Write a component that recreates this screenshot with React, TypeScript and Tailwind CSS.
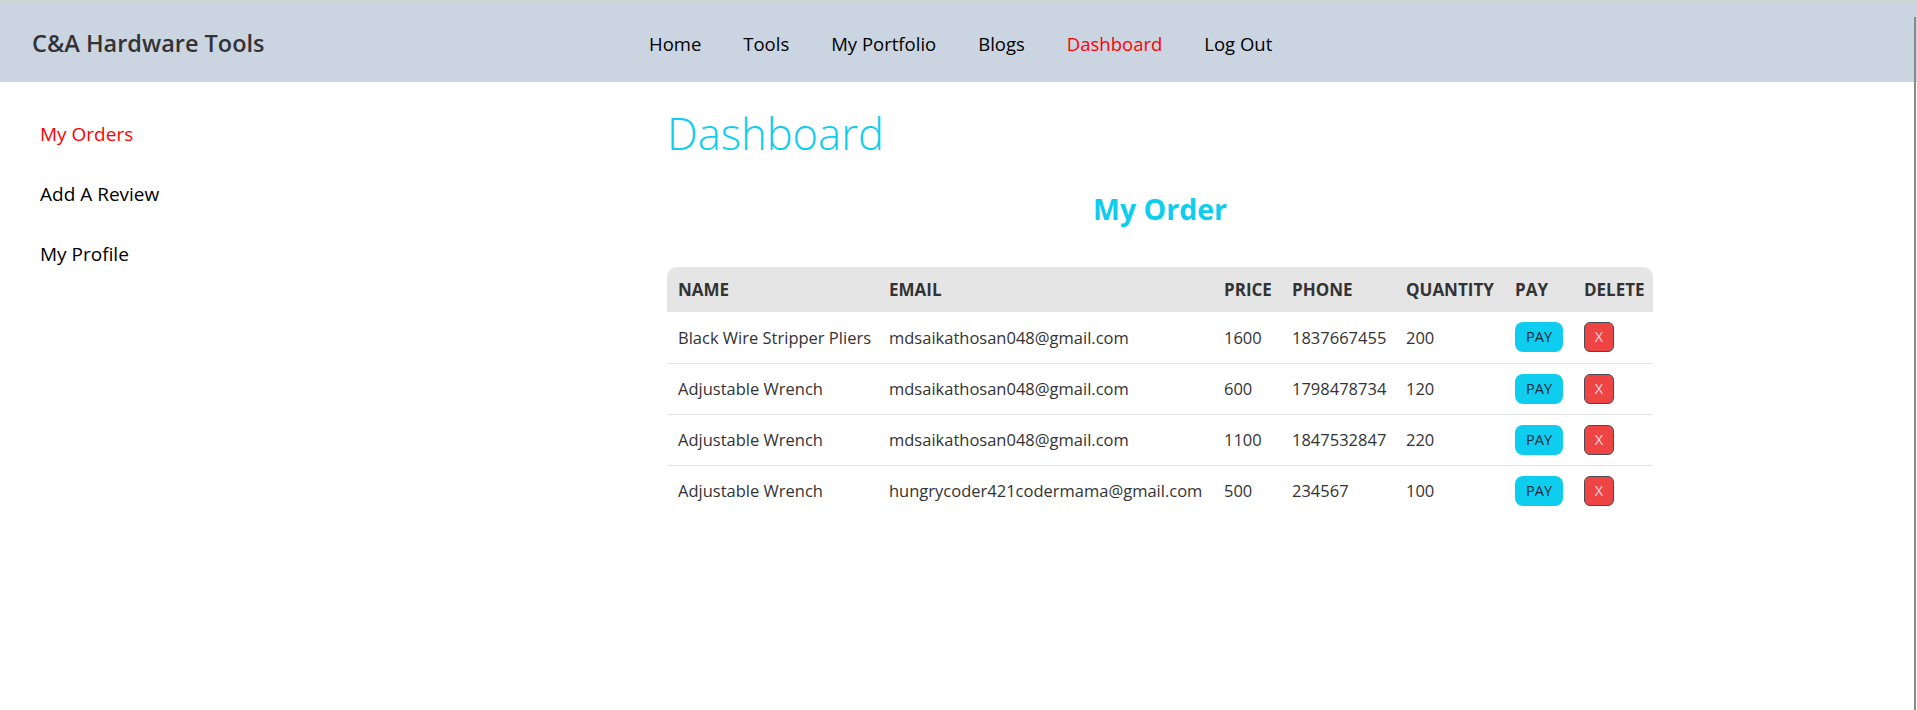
import React from 'react';

const orders = [
  { name: 'Black Wire Stripper Pliers', email: 'mdsaikathosan048@gmail.com', price: 1600, phone: '1837667455', qty: 200 },
  { name: 'Adjustable Wrench', email: 'mdsaikathosan048@gmail.com', price: 600, phone: '1798478734', qty: 120 },
  { name: 'Adjustable Wrench', email: 'mdsaikathosan048@gmail.com', price: 1100, phone: '1847532847', qty: 220 },
  { name: 'Adjustable Wrench', email: 'hungrycoder421codermama@gmail.com', price: 500, phone: '234567', qty: 100 },
];

const navLinks = ['Home', 'Tools', 'My Portfolio', 'Blogs', 'Dashboard', 'Log Out'];

export default function App() {
  return (
    <div className="min-h-[710px] bg-white font-['Open_Sans',sans-serif] text-black">
      <header className="flex h-[82px] items-center border-t border-[#d4d4d4] bg-[#cbd5e1] pt-[4px]">
        <div className="w-[649px] shrink-0 pl-8">
          <a className="text-[23.5px] font-semibold text-[#333]">C&amp;A Hardware Tools</a>
        </div>
        <nav className="flex items-center gap-[42px] text-[18.5px]">
          {navLinks.map((l) => (
            <a key={l} className={l === 'Dashboard' ? 'text-[#ff0000]' : 'text-black'}>
              {l}
            </a>
          ))}
        </nav>
      </header>

      <div className="flex">
        <aside className="w-[667px] shrink-0 pl-10 pt-[22px] text-[19px]">
          <ul className="flex flex-col">
            <li className="flex h-[60px] items-center text-[#ff0000]">My Orders</li>
            <li className="flex h-[60px] items-center">Add A Review</li>
            <li className="flex h-[60px] items-center">My Profile</li>
          </ul>
        </aside>

        <main className="w-[986px] shrink-0">
          <h2 className="mt-[28px] text-[43.5px] font-light leading-[48px] text-[#0ecdef]">Dashboard</h2>
          <h3 className="mt-[33px] text-center text-[28.5px] font-bold leading-[36px] text-[#0ecdef]">My Order</h3>

          <table className="mt-[40px] w-full table-fixed border-collapse text-left text-[16.5px] text-[#333]">
            <thead>
              <tr className="h-[45px] bg-[#e5e5e5] text-[17px] font-bold uppercase">
                <th className="w-[211px] rounded-tl-[10px] px-[11px]">Name</th>
                <th className="w-[335px] px-[11px]">Email</th>
                <th className="w-[68px] px-[11px]">Price</th>
                <th className="w-[114px] px-[11px]">Phone</th>
                <th className="w-[109px] px-[11px]">Quantity</th>
                <th className="w-[69px] px-[11px]">Pay</th>
                <th className="w-[80px] rounded-tr-[10px] px-[11px]">Delete</th>
              </tr>
            </thead>
            <tbody>
              {orders.map((o, i) => (
                <tr key={i} className={i < orders.length - 1 ? 'h-[51px] border-b border-[#e5e5e5]' : 'h-[51px]'}>
                  <td className="whitespace-nowrap px-[11px] pt-[2px]">{o.name}</td>
                  <td className="whitespace-nowrap px-[11px] pt-[2px]">{o.email}</td>
                  <td className="px-[11px] pt-[2px]">{o.price}</td>
                  <td className="px-[11px] pt-[2px]">{o.phone}</td>
                  <td className="px-[11px] pt-[2px]">{o.qty}</td>
                  <td className="px-[11px]">
                    <button className="flex h-[30px] w-[48px] items-center justify-center rounded-[8px] bg-[#0ecdef] text-[14.5px] text-[#1f2937]">
                      PAY
                    </button>
                  </td>
                  <td className="px-[11px]">
                    <button className="flex h-[30px] w-[30px] items-center justify-center rounded-[6px] border border-[#4b4b55] bg-[#ef4444] text-[14.5px] text-[#fbd5e5]">
                      X
                    </button>
                  </td>
                </tr>
              ))}
            </tbody>
          </table>
        </main>
      </div>

      <div className="fixed bottom-0 right-[1px] top-[17px] w-[2px] bg-[#8a8a8a]" />
    </div>
  );
}
